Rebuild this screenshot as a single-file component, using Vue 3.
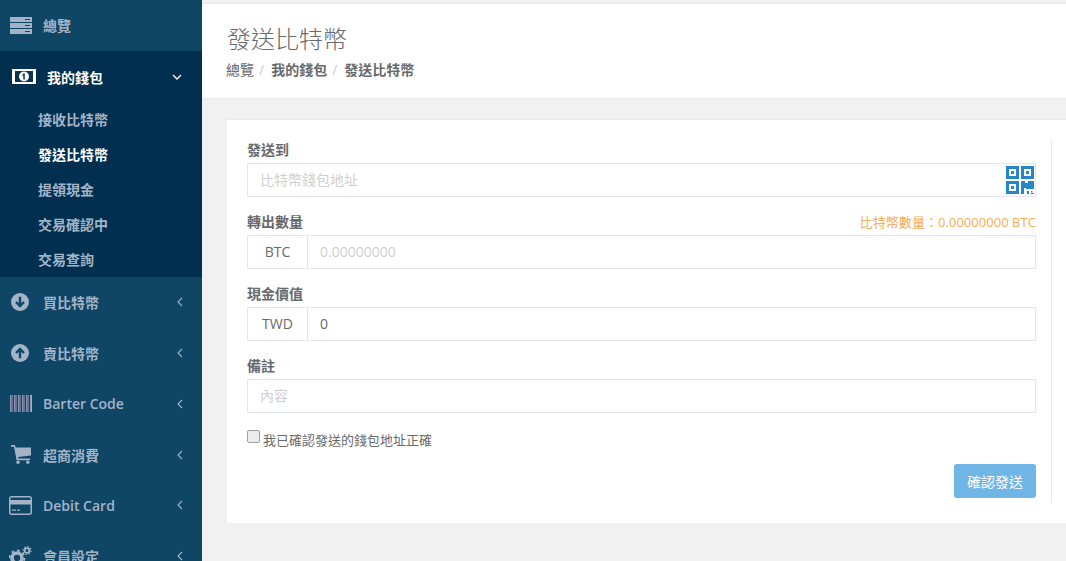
<script setup>
const subItems = [
  { label: '接收比特幣' },
  { label: '發送比特幣', current: true },
  { label: '提領現金' },
  { label: '交易確認中' },
  { label: '交易查詢' },
]
</script>

<template>
  <div class="page">
    <aside class="sidebar">
      <a class="item">
        <span class="ico"><svg viewBox="0 0 22 17" width="22" height="17"><path fill="#a3b4c8" d="M0 0h22v5H0zM0 6h22v5H0zM0 12h22v5H0z"/><path fill="#0f4565" d="M15 2h5v1h-5zM15 8h5v1h-5zM15 14h5v1h-5z"/></svg></span>
        <span class="txt">總覽</span>
      </a>
      <div class="open">
        <a class="item head">
          <span class="ico"><svg viewBox="0 0 24 15" width="24" height="15"><path fill="#fff" d="M0 0h24v15H0z"/><path fill="#0a3350" d="M3 2h18v11H3z"/><circle cx="12" cy="7.5" r="5" fill="#fff"/><path fill="#0a3350" d="M11.3 4.5h1.5v6h-1.5zM10 5.5h1.5v1H10z"/></svg></span>
          <span class="txt">我的錢包</span>
          <svg class="chev" viewBox="0 0 10 10" width="10" height="10"><path d="M1 3l4 4 4-4" fill="none" stroke="#fff" stroke-width="1.3"/></svg>
        </a>
        <a v-for="s in subItems" :key="s.label" class="sub" :class="{ current: s.current }">{{ s.label }}</a>
      </div>
      <a class="item">
        <span class="ico arrow"><svg viewBox="0 0 18 18" width="18" height="18"><circle cx="9" cy="9" r="9" fill="#a3b4c8"/><path d="M9 3.8v9M5 9l4 4 4-4" fill="none" stroke="#0f4565" stroke-width="2.4"/></svg></span>
        <span class="txt">買比特幣</span>
        <svg class="chev side" viewBox="0 0 10 10" width="10" height="10"><path d="M7 1L3 5l4 4" fill="none" stroke="#a3b4c8" stroke-width="1.1"/></svg>
      </a>
      <a class="item">
        <span class="ico arrow"><svg viewBox="0 0 18 18" width="18" height="18"><circle cx="9" cy="9" r="9" fill="#a3b4c8"/><path d="M9 14.2v-9M5 9l4-4 4 4" fill="none" stroke="#0f4565" stroke-width="2.4"/></svg></span>
        <span class="txt">賣比特幣</span>
        <svg class="chev side" viewBox="0 0 10 10" width="10" height="10"><path d="M7 1L3 5l4 4" fill="none" stroke="#a3b4c8" stroke-width="1.1"/></svg>
      </a>
      <a class="item">
        <span class="ico"><svg viewBox="0 0 22 17" width="22" height="17"><path fill="#8d93bb" d="M0 0h1v17H0zM4 0h1v17H4zM8 0h1v17H8zM12 0h1v17h-1zM16 0h1v17h-1zM20 0h1v17h-1z"/><path fill="#b8a9b4" d="M1.5 0h1v17h-1zM5.5 0h1v17h-1zM9.5 0h1v17h-1zM13.5 0h1v17h-1zM17.5 0h1v17h-1zM21 0h1v17h-1z"/></svg></span>
        <span class="txt">Barter Code</span>
        <svg class="chev side" viewBox="0 0 10 10" width="10" height="10"><path d="M7 1L3 5l4 4" fill="none" stroke="#a3b4c8" stroke-width="1.1"/></svg>
      </a>
      <a class="item">
        <span class="ico"><svg viewBox="0 0 20 19" width="20" height="19"><path fill="#a3b4c8" d="M0 0h4l.7 2.5H20v8l-13 1.5.4 1.5H19v1.8H5.6L3 1.8H0z"/><circle cx="7" cy="17.3" r="1.7" fill="#a3b4c8"/><circle cx="16.8" cy="17.3" r="1.7" fill="#a3b4c8"/></svg></span>
        <span class="txt">超商消費</span>
        <svg class="chev side" viewBox="0 0 10 10" width="10" height="10"><path d="M7 1L3 5l4 4" fill="none" stroke="#a3b4c8" stroke-width="1.1"/></svg>
      </a>
      <a class="item">
        <span class="ico"><svg viewBox="0 0 23 19" width="23" height="19"><rect x=".75" y=".75" width="21.5" height="17.5" rx="2" fill="none" stroke="#a3b4c8" stroke-width="1.5"/><path fill="#a3b4c8" d="M1 4h21v4.6H1zM3 13.5h4v1.3H3zM8 13.5h3v1.3H8z"/></svg></span>
        <span class="txt">Debit Card</span>
        <svg class="chev side" viewBox="0 0 10 10" width="10" height="10"><path d="M7 1L3 5l4 4" fill="none" stroke="#a3b4c8" stroke-width="1.1"/></svg>
      </a>
      <a class="item">
        <span class="ico"><svg viewBox="0 0 23 20" width="23" height="20"><circle cx="8" cy="12" r="5" fill="none" stroke="#a3b4c8" stroke-width="3.6"/><circle cx="8" cy="12" r="7.4" fill="none" stroke="#a3b4c8" stroke-width="2" stroke-dasharray="2.6 3.2"/><circle cx="18" cy="4.5" r="2.4" fill="none" stroke="#a3b4c8" stroke-width="1.8"/><circle cx="18" cy="4.5" r="4" fill="none" stroke="#a3b4c8" stroke-width="1.2" stroke-dasharray="1.5 1.6"/></svg></span>
        <span class="txt">會員設定</span>
        <svg class="chev side" viewBox="0 0 10 10" width="10" height="10"><path d="M7 1L3 5l4 4" fill="none" stroke="#a3b4c8" stroke-width="1.1"/></svg>
      </a>
    </aside>

    <main class="main">
      <header class="header">
        <h1>發送比特幣</h1>
        <nav class="crumbs">
          <span class="plain">總覽</span><i>/</i><b>我的錢包</b><i>/</i><b>發送比特幣</b>
        </nav>
      </header>

      <section class="card">
        <form class="form">
          <div class="field">
            <label>發送到</label>
            <div class="qr-wrap">
              <input placeholder="比特幣錢包地址" />
              <svg class="qr" viewBox="0 0 28 28" width="28" height="28">
                <g fill="#2786c8">
                  <path fill-rule="evenodd" d="M0 0h13v13H0zM3 3v7h7V3zM15 0h13v13H15zM18 3v7h7V3zM0 15h13v13H0zM3 18v7h7v-7z"/>
                  <path d="M5 5h3v3H5zM20 5h3v3h-3zM5 20h3v3H5z"/>
                  <path d="M15 15h4v2h3v-2h6v8h-8v-1h-2v6h-3zM21 25h2v3h-2zM25 25h1.500v1.500H25zM25 27h3v1h-3z"/>
                </g>
              </svg>
            </div>
          </div>
          <div class="field">
            <div class="label-row">
              <label>轉出數量</label>
              <span class="hint">比特幣數量：0.00000000 BTC</span>
            </div>
            <div class="group">
              <span class="addon">BTC</span>
              <input placeholder="0.00000000" />
            </div>
          </div>
          <div class="field">
            <label>現金價值</label>
            <div class="group">
              <span class="addon">TWD</span>
              <input value="0" />
            </div>
          </div>
          <div class="field">
            <label>備註</label>
            <input placeholder="內容" />
          </div>
          <label class="check"><input type="checkbox" /><span>我已確認發送的錢包地址正確</span></label>
          <div class="actions"><button type="button">確認發送</button></div>
        </form>
      </section>
    </main>
  </div>
</template>

<style>
html, body { margin: 0; height: 100%; overflow: hidden; }
</style>

<style scoped>
.page {
  display: flex;
  height: 561px;
  overflow: hidden;
  font-family: "Open Sans", "Noto Sans CJK TC", sans-serif;
  font-size: 14px;
  color: #676a6c;
  background: #f1f1f1;
}
.sidebar {
  width: 202px;
  flex: none;
  background: #0f4565;
  overflow: hidden;
}
.item {
  display: flex;
  align-items: center;
  height: 50.8px;
  padding-left: 9px;
  color: #a3b4c8;
  font-weight: 600;
  box-sizing: border-box;
}
.item .ico {
  display: flex;
  justify-content: center;
  align-items: center;
  width: 23px;
  margin-right: 11px;
  flex: none;
}
.item .ico.arrow { width: 22px; margin-right: 12px; }
.item .txt { flex: 1; }
.item .chev { flex: none; margin-right: 20px; }
.item .chev.side { margin-right: 17px; }
.open { background: #002f4f; height: 226px; }
.head { color: #fff; padding-left: 12px; height: 52px; }
.head .ico { width: 24px; }
.sub {
  display: block;
  height: 35px;
  line-height: 34px;
  padding-left: 38px;
  color: #a3b4c8;
  font-weight: 600;
}
.sub.current { color: #fff; }
.main { flex: 1; min-width: 0; }
.header {
  margin-top: 3px;
  height: 96px;
  background: #fff;
  border-top: 1px solid #e7eaec;
  border-bottom: 1px solid #e7eaec;
  box-sizing: border-box;
  padding: 20px 25px 0;
}
h1 {
  margin: 0;
  font-size: 24px;
  font-weight: 300;
  line-height: 30px;
  color: #676a6c;
}
.crumbs { margin: 6px 0 0 -1px; line-height: 20px; color: #676a6c; }
.crumbs .plain { font-weight: 400; }
.crumbs i { font-style: normal; color: #ccc; padding: 0 7px 0 5px; }
.crumbs b { font-weight: 700; }
.card {
  margin: 20px 0 0 25px;
  height: 404px;
  background: #fff;
  border-top: 1px solid #e7eaec;
  box-sizing: border-box;
  padding: 20px 14px 20px 20px;
}
.form {
  width: 805px;
  height: 363px;
  box-sizing: border-box;
  padding-right: 15px;
  border-right: 1px solid #e7eaec;
}
.field { margin-bottom: 15px; }
.field label {
  display: block;
  font-weight: 700;
  line-height: 20px;
  margin-bottom: 3px;
}
.label-row { display: flex; justify-content: space-between; align-items: flex-start; }
.hint { font-size: 13px; color: #f8ac59; line-height: 20px; letter-spacing: 0.04px; }
input:not([type]) {
  display: block;
  width: 100%;
  height: 34px;
  box-sizing: border-box;
  border: 1px solid #e5e6e7;
  padding: 5px 12px 7px;
  font: inherit;
  color: #676a6c;
  outline: none;
  background: #fff;
}
input::placeholder { color: #cfcfcf; opacity: 1; }
.qr-wrap { position: relative; }
.qr { position: absolute; right: 2px; top: 3px; }
.group { display: flex; }
.addon {
  width: 60px;
  flex: none;
  height: 34px;
  box-sizing: border-box;
  border: 1px solid #e5e6e7;
  border-right: 0;
  text-align: center;
  line-height: 32px;
  color: #676a6c;
}
.check {
  display: flex;
  align-items: flex-start;
  height: 20px;
  margin-top: 17px;
  font-size: 13px;
  line-height: 20px;
  color: #676a6c;
}
.check input {
  appearance: none;
  box-sizing: border-box;
  margin: 0 3px 0 0;
  width: 13px;
  height: 13px;
  flex: none;
  background: #ececec;
  border: 1px solid #a0a0a0;
  border-radius: 2px;
}
.actions { display: flex; justify-content: flex-end; margin-top: 14px; }
button {
  width: 82px;
  height: 34px;
  border: 0;
  border-radius: 3px;
  background: #6fb5e6;
  color: #fff;
  font: inherit;
  padding: 0;
}
</style>
